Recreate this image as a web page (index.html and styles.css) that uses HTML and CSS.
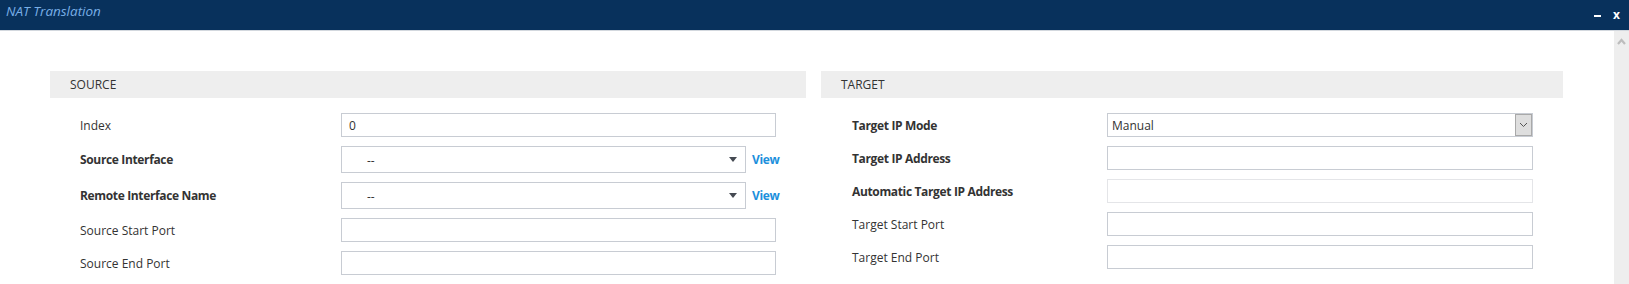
FILE: index.html
```html
<!DOCTYPE html>
<html lang="en">
<head>
    <meta charset="UTF-8">
    <meta name="viewport" content="width=device-width, initial-scale=1.0">
    <title>NAT Translation</title>
    <link rel="stylesheet" href="styles.css">
</head>
<body>
    <div class="window">
        <div class="titlebar">
            <span class="title">NAT Translation</span>
            <div class="win-controls">
                <span class="minimize"></span>
                <span class="close">x</span>
            </div>
        </div>

        <div class="window-body">
            <div class="content">
                <!-- Source column -->
                <section class="panel panel-source">
                    <div class="panel-head">SOURCE</div>
                    <div class="rows">
                        <div class="row">
                            <label class="label">Index</label>
                            <input class="field field-wide" type="text" value="0">
                        </div>
                        <div class="row row-select">
                            <label class="label bold">Source Interface</label>
                            <div class="dropdown">
                                <span class="dropdown-value">--</span>
                                <span class="caret"></span>
                            </div>
                            <a class="view-link" href="#">View</a>
                        </div>
                        <div class="row row-select">
                            <label class="label bold">Remote Interface Name</label>
                            <div class="dropdown">
                                <span class="dropdown-value">--</span>
                                <span class="caret"></span>
                            </div>
                            <a class="view-link" href="#">View</a>
                        </div>
                        <div class="row">
                            <label class="label">Source Start Port</label>
                            <input class="field field-wide" type="text">
                        </div>
                        <div class="row">
                            <label class="label">Source End Port</label>
                            <input class="field field-wide" type="text">
                        </div>
                    </div>
                </section>

                <!-- Target column -->
                <section class="panel panel-target">
                    <div class="panel-head">TARGET</div>
                    <div class="rows">
                        <div class="row">
                            <label class="label bold">Target IP Mode</label>
                            <div class="native-select">
                                <span class="native-value">Manual</span>
                                <span class="native-btn">
                                    <svg width="9" height="6" viewBox="0 0 9 6">
                                        <path d="M1 1 L4.5 4.5 L8 1" fill="none" stroke="#555" stroke-width="1"/>
                                    </svg>
                                </span>
                            </div>
                        </div>
                        <div class="row">
                            <label class="label bold">Target IP Address</label>
                            <input class="field" type="text">
                        </div>
                        <div class="row">
                            <label class="label bold">Automatic Target IP Address</label>
                            <input class="field field-disabled" type="text" disabled>
                        </div>
                        <div class="row">
                            <label class="label">Target Start Port</label>
                            <input class="field" type="text">
                        </div>
                        <div class="row">
                            <label class="label">Target End Port</label>
                            <input class="field" type="text">
                        </div>
                    </div>
                </section>
            </div>

            <div class="scrollbar">
                <svg width="9" height="7" viewBox="0 0 9 7">
                    <path d="M1 6 L4.5 2 L8 6" fill="none" stroke="#bdbdbd" stroke-width="2.2"/>
                </svg>
            </div>
        </div>
    </div>
</body>
</html>
```

FILE: styles.css
```css
* {
    box-sizing: border-box;
}
body {
    margin: 0;
    font-family: "Open Sans", Arial, sans-serif;
    font-size: 12px;
    color: #333;
    background: #fff;
}
.window {
    width: 1629px;
    height: 284px;
    overflow: hidden;
}
.titlebar {
    height: 31px;
    background: #08315c;
    border-bottom: 1px solid #d3d8de;
    display: flex;
    align-items: center;
    justify-content: space-between;
    padding: 0 0 0 6px;
}
.title {
    font-style: italic;
    font-size: 13.5px;
    color: #78aee6;
    margin-top: -8px;
}
.win-controls {
    display: flex;
    align-items: center;
    gap: 12px;
    padding-right: 9px;
    margin-top: -1px;
}
.minimize {
    width: 7px;
    height: 2px;
    background: #fff;
    margin-top: 2px;
}
.close {
    color: #fff;
    font-weight: bold;
    font-size: 12px;
    line-height: 1;
}
.window-body {
    display: flex;
    height: 253px;
}
.content {
    flex: 1;
    display: flex;
    gap: 15px;
    padding: 40px 0 0 50px;
}
.panel-source {
    width: 756px;
}
.panel-target {
    width: 742px;
}
.panel-head {
    height: 27px;
    background: #eeeeee;
    display: flex;
    align-items: center;
    padding-left: 20px;
    font-size: 12px;
    color: #333;
}
.rows {
    display: flex;
    flex-direction: column;
    gap: 9px;
    padding-top: 15px;
}
.panel-source .rows {
    padding-left: 30px;
}
.panel-target .rows {
    padding-left: 31px;
}
.row {
    display: flex;
    align-items: center;
    height: 24px;
}
.row-select {
    height: 27px;
}
.label {
    flex: none;
    color: #333;
}
.panel-source .label {
    width: 261px;
}
.panel-target .label {
    width: 255px;
}
.bold {
    font-weight: 700;
    letter-spacing: -0.35px;
}
.field {
    height: 24px;
    width: 426px;
    border: 1px solid #c8ccd3;
    padding: 0 7px;
    font-family: inherit;
    font-size: 12px;
    color: #333;
    background: #fff;
    outline: none;
}
.field-wide {
    width: 435px;
}
.field-disabled {
    border-color: #e4e5e8;
}
.dropdown {
    width: 405px;
    height: 27px;
    border: 1px solid #c8ccd3;
    display: flex;
    align-items: center;
    justify-content: space-between;
    padding: 0 8px 0 25px;
}
.dropdown-value {
    font-size: 12px;
    color: #333;
    margin-top: 2px;
}
.caret {
    width: 0;
    height: 0;
    border-left: 4px solid transparent;
    border-right: 4px solid transparent;
    border-top: 5px solid #454a52;
}
.view-link {
    margin-left: 6px;
    color: #1c8fdc;
    font-weight: 700;
    letter-spacing: -0.35px;
    text-decoration: none;
    font-size: 12px;
}
.native-select {
    width: 426px;
    height: 24px;
    border: 1px solid #c8ccd3;
    display: flex;
    align-items: stretch;
    justify-content: space-between;
}
.native-value {
    padding-left: 4px;
    display: flex;
    align-items: center;
}
.native-btn {
    width: 17px;
    background: #dedede;
    border: 1px solid #a9a9a9;
    display: flex;
    align-items: center;
    justify-content: center;
}
.scrollbar {
    width: 15px;
    background: #eeeeee;
    display: flex;
    justify-content: center;
    align-items: flex-start;
    padding-top: 7px;
}
```
